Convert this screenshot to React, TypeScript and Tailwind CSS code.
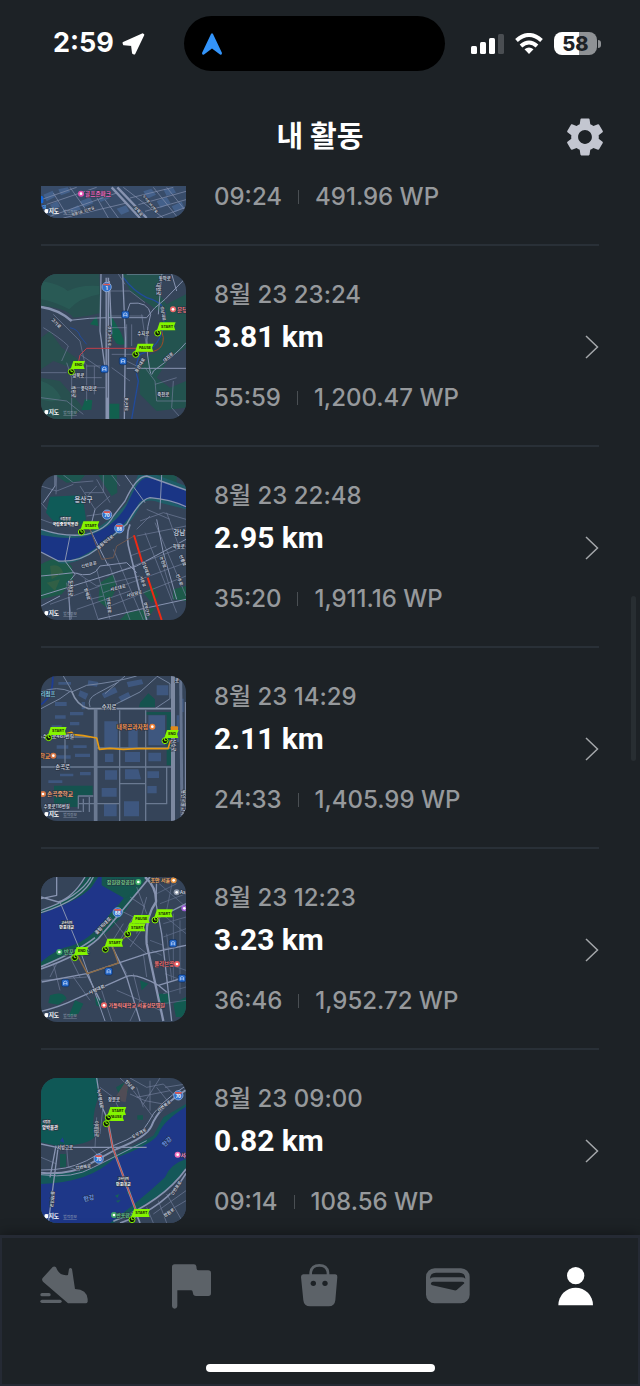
import type { ReactNode } from "react";
import { MdSettings } from "react-icons/md";

type MapProps = { top: number; label: string; children: ReactNode };

const MapFrame = ({ top, label, children }: MapProps) => (
  <svg
    role="img"
    aria-label={label}
    viewBox={`33 ${top} 435 435`}
    className="size-[145px] shrink-0 rounded-2xl bg-[#354459] font-['Inter','Noto_Sans_CJK_KR',sans-serif]"
  >
    {children}
    <path
      d={`M43 ${top + 415} q0 -8 6 -7 q3 1 6 0 l-1 11 q-4 4 -8 1 q-3 -1 -3 -5z`}
      fill="#fff"
    />
    <text x="56" y={top + 421} fontSize="17" fontWeight="700" fill="#fff">
      지도
    </text>
    <text x="100" y={top + 420} fontSize="11" fill="#9aa6b8" textDecoration="underline">
      법적정보
    </text>
  </svg>
);

type RoadProps = { d: string; w?: number; color?: string };

const Road = ({ d, w = 3, color = "#8793b0" }: RoadProps) => (
  <path d={d} fill="none" stroke={color} strokeWidth={w} strokeLinejoin="round" />
);

type LabelProps = {
  x: number;
  y: number;
  size?: number;
  color?: string;
  rotate?: number;
  children: string;
};

const Label = ({ x, y, size = 13, color = "#c6cddb", rotate = 0, children }: LabelProps) => (
  <text
    x={x}
    y={y}
    fontSize={size}
    fontWeight="600"
    fill={color}
    stroke="#27303f"
    strokeWidth="3"
    paintOrder="stroke"
    textAnchor="middle"
    transform={`rotate(${rotate} ${x} ${y})`}
  >
    {children}
  </text>
);

const Pin = ({ x, y, children }: { x: number; y: number; children: string }) => {
  const w = children === "END" ? 35 : 48;
  return (
    <g>
      <circle cx={x} cy={y} r="9" fill="#0c1405" stroke="#84f500" strokeWidth="3" />
      <path d={`M${x - 1} ${y - 6} v6 h6`} stroke="#84f500" strokeWidth="3" fill="none" />
      <path
        d={`M${x + 6} ${y - 32} h${w} l-5 12 l4 12 h-${w + 4} l-5 6 z`}
        fill="#84f500"
      />
      <text x={x + 10} y={y - 16} fontSize="11" fontWeight="700" fill="#182608">
        {children}
      </text>
    </g>
  );
};

const Shield = ({ x, y, children }: { x: number; y: number; children: string }) => (
  <g>
    <circle cx={x} cy={y} r="14" fill="#2f6fc9" stroke="#a9c3ee" strokeWidth="2" />
    <path d={`M${x - 10} ${y - 10} h20 v5 h-20z`} fill="#e0584f" />
    <text x={x} y={y + 8} fontSize="13" fontWeight="700" fill="#fff" textAnchor="middle">
      {children}
    </text>
  </g>
);

const Station = ({ x, y }: { x: number; y: number }) => (
  <g>
    <rect x={x - 11} y={y - 11} width="22" height="22" rx="5" fill="#2468c9" stroke="#0e2c5c" strokeWidth="2" />
    <path d={`M${x - 5} ${y + 6} v-9 q5 -5 10 0 v9 M${x - 5} ${y + 2} h10`} stroke="#d3e4ff" strokeWidth="2" fill="none" />
  </g>
);

const Poi = ({ x, y, color }: { x: number; y: number; color: string }) => (
  <g>
    <circle cx={x} cy={y} r="9" fill={color} />
    <circle cx={x} cy={y} r="4" fill="#fff" />
  </g>
);

const GolfMap = () => (
  <MapFrame top={-325} label="골프존파크 경로">
    <rect x="33" y="-325" width="435" height="435" fill="#384c69" />
    <g fill="#43608a">
      <path d="M40 40l28 -12 8 18 -26 14z M85 24l28 -6 8 14 -28 10z M60 70l22 -10 8 16 -22 8z M150 60l30 -12 10 18 -30 12z M200 40l26 -10 14 20 -28 12z M340 30l24 -8 14 18 -26 12z M380 60l30 -14 12 20 -30 14z M260 82l28 -10 10 18 -24 10z M400 24l30 -4 8 14 -28 10z M120 84l24 -12 12 16 -26 12z M425 75l30 -14 8 18 -28 14z" />
    </g>
    <Road w={7} d="M245 18 L330 110 M262 18 L350 110" />
    <Road w={2} d="M33 55 L140 18 M33 75 L200 18 M70 35 L110 100 M120 18 L175 95 M60 105 L260 35 M100 110 L290 65 M190 30 L235 110 M225 55 L265 110" />
    <Road w={2} d="M280 18 L400 110 M300 50 L430 18 M325 70 L468 30 M345 90 L468 55 M370 18 L440 105 M410 18 L468 90 M380 110 L468 78" />
    <Label x={160} y={94} size={11} rotate={-18}>성복1로 35번길</Label>
    <Label x={322} y={92} size={12} rotate={50}>성복로</Label>
    <Label x={358} y={70} size={10} rotate={50}>수지로342번길</Label>
    <rect x="22" y="44" width="18" height="22" rx="5" fill="#1268e0" />
    <Label x={43} y={82} size={15} color="#55a7ff">역</Label>
    <Poi x={153} y={37} color="#e44fb0" />
    <Label x={204} y={43} size={17} color="#f06ac0">골프존파크</Label>
  </MapFrame>
);

const SujiMap = () => (
  <MapFrame top={279} label="8월 23 23:24 경로">
    <path d="M33 279 H208 L212 395 Q180 405 130 410 Q110 380 33 375z" fill="#27504f" />
    <path d="M33 470 L60 450 L95 500 L145 535 L125 560 L70 540 L33 565z M33 590 L90 600 L125 640 L160 680 L120 714 H33z" fill="#28504f" />
    <path d="M275 279 H400 L375 320 L410 370 L468 340 V500 L420 530 L380 590 L420 620 L468 600 V680 L380 690 L330 640 L325 540 L385 510 L400 400 L300 330z" fill="#23534f" />
    <path d="M290 340 L345 365 L360 400 L350 540 L300 560 L290 400z" fill="#354459" />
    <path d="M238 395 q18 30 35 60 l12 35 q-25 5 -30 -10 q-15 -20 -12 -45z M165 655 l22 3 -3 28 -30 2z M238 668 h30 v45 h-30z M180 430 l20 -25 5 30z M390 440 l18 -40 5 45z" fill="#12604e" />
    <path d="M33 300 q60 10 80 30 q40 -20 95 -15 v25 q-60 10 -90 45 q-50 -25 -85 -30z M33 600 q40 10 60 50 q-20 20 -60 5z" fill="#2b605a" opacity="0.6" />
    <Road w={4} color="#214b9c" d="M280 290 Q310 330 350 350 Q420 370 402 420 Q395 500 330 520 Q310 560 325 600 L305 714" />
    <Road w={3} color="#214b9c" d="M120 440 q25 5 30 25 l20 25" />
    <Road w={2} color="#727f9b" d="M70 400 L150 480 L165 550 M40 440 Q90 470 115 495 L95 540 M33 575 H110 M110 545 L125 590 V714 M170 550 V660 M125 590 H215 M130 620 H225 M170 555 H230 M193 555 V640 M150 520 L230 575 M33 650 L110 660 L160 700" />
    <Road w={2} color="#727f9b" d="M240 330 H300 L345 365 M240 405 H340 M243 440 H290 M290 430 V500 M305 430 V495 M245 520 H330 M245 560 L300 600 M290 540 L330 560 M345 560 L375 600 L380 660 H468 M375 610 L440 590 M430 600 L425 680 L455 714 M265 279 L285 310 M335 400 L350 500" />
    <Road w={3} d="M33 377 Q85 385 120 418 Q180 410 230 410 H350 Q370 380 405 355 L468 290" />
    <Road w={7} d="M33 378 Q85 385 125 420" />
    <Road w={3} d="M285 410 L300 367 Q355 360 362 400 Q340 470 360 570 Q365 590 370 570 Q440 520 468 485 M290 562 H468 M290 279 H400 M395 279 L385 400 M425 279 L440 330" />
    <Road w={4} d="M278 279 L286 470 L283 714" />
    <Road w={4} d="M213 279 L210 450 L225 560 M238 300 L245 460" />
    <Road w={11} d="M232 290 V714" />
    <Road w={2} color="#354459" d="M232 290 V650" />
    <Road w={3} color="#c13f49" d="M145 545 L150 522 L170 502 H320" />
    <Road w={3} color="#a24b25" d="M325 508 Q400 525 400 470 L395 450" />
    <Label x={235} y={465} size={11} rotate={90}>경부고속도로</Label>
    <Label x={285} y={670} size={11} rotate={90}>용구대로</Label>
    <Label x={340} y={461}>수지로</Label>
    <Label x={75} y={430} rotate={45}>고기로</Label>
    <Label x={145} y={588}>성복로</Label>
    <Label x={176} y={626}>풍덕천로</Label>
    <Label x={126} y={632} rotate={90}>상현로</Label>
    <Label x={400} y={644}>죽전로</Label>
    <Label x={404} y={297}>동막로</Label>
    <Label x={380} y={325} rotate={90}>대왕로</Label>
    <Label x={395} y={398} size={12} rotate={80}>성남대로</Label>
    <Label x={418} y={532} rotate={-40}>대지로</Label>
    <Label x={334} y={555} rotate={-60}>포은대로</Label>
    <Shield x={230} y={318}>1</Shield>
    <Station x={286} y={401} />
    <Station x={279} y={540} />
    <Station x={223} y={564} />
    <Poi x={429} y={385} color="#ef6b6b" />
    <Label x={457} y={392} size={17} color="#f57b7b">분당</Label>
    <Pin x={383} y={456}>START</Pin>
    <Pin x={317} y={520}>PAUSE</Pin>
    <Pin x={124} y={572}>END</Pin>
  </MapFrame>
);

const YongsanMap = () => (
  <MapFrame top={27} label="8월 23 22:48 경로">
    <path d="M60 92 L150 88 L160 105 L168 160 L150 178 L70 165 L48 140z" fill="#0f5b58" />
    <path d="M75 27 H165 L150 45 L110 50z M205 27 H260 L262 80 L245 90 L225 60z M360 27 H440 V60 L375 45z" fill="#1d564f" />
    <path d="M33 295 Q90 260 125 300 L130 340 L95 385 L33 400z M210 350 l40 -25 10 40 -30 60 -25 -20z M290 440 L375 425 L350 462 H270z M340 380 l30 -20 15 30 -20 20z M430 370 l38 -10 v45 l-40 -5z" fill="#1d5a4a" />
    <path d="M60 300 q30 -10 40 20 l-35 20z M50 350 l40 -10 -15 35z" fill="#315f45" />
    <path d="M33 190 Q120 220 185 195 Q250 160 290 110 L325 25 H375 L468 60 V130 L390 110 Q340 90 325 130 Q300 180 240 220 Q150 300 90 292 L33 255z" fill="#1f5d68" />
    <path d="M33 207 Q130 225 180 207 Q255 180 290 118 Q325 35 350 35 Q400 40 468 75 V126 Q350 70 325 115 Q290 175 232 218 Q150 290 85 285 L33 258z" fill="#1a3585" />
    <Road w={2} color="#727f9b" d="M33 60 L80 75 L130 55 M80 27 L78 85 M150 60 L195 130 L240 90 M155 110 L200 60 M170 150 L240 140 M100 27 L130 50 L190 45 M220 27 V80 M245 27 L270 60 M33 160 L60 170 L90 175 M200 40 L240 110 M165 80 H220 M33 110 L50 130" />
    <Road w={2} color="#727f9b" d="M140 320 L200 360 L330 330 M110 350 L125 460 M60 415 L210 360 M200 310 L240 460 M235 290 L300 462 M250 250 L340 462 M165 340 L205 462 M300 270 L380 240 M230 330 L468 240 M220 380 L468 290 M240 420 L468 330 M140 430 L300 375 M345 200 L440 440 M375 170 L468 390 M410 140 L450 250 M330 165 L400 140 L468 160 M320 210 L468 180 M400 300 L430 400 M180 400 L220 390 M320 190 L360 150 M350 130 L420 160" />
    <Road w={4} d="M33 190 Q110 215 170 205 Q230 190 250 150 L285 105 Q320 30 350 30 L468 72" />
    <Road w={4} d="M33 258 L85 285 Q150 290 200 250 L290 175 Q330 100 360 95 Q420 100 468 122" />
    <Road w={3} d="M120 210 L105 285 L135 325 L115 350 L120 462 M195 130 L180 190 L235 300 M285 27 L345 110 M395 27 L390 130 M33 330 Q90 325 130 320 Q190 340 210 300 L290 290 L320 320 M380 160 L400 260 L440 400 M205 460 L330 430 L468 400 M75 27 V60 L40 110" />
    <Road w={5} d="M300 175 Q285 210 300 260 L350 462" />
    <Road w={3} d="M30 390 L160 350 L320 300 L468 220 M33 420 L90 390" />
    <Road w={3} color="#6c5750" d="M180 190 L215 280 L250 275 L260 240 L312 210" />
    <Road w={6} color="#ee2a14" d="M312 208 L337 290 M353 335 L395 462" />
    <Label x={160} y={107} size={20} color="#b8c3d4">용산구</Label>
    <Label x={448} y={207} size={20} color="#b8c3d4">강남</Label>
    <Label x={106} y={162} size={9} color="#fff">국립중앙</Label>
    <Label x={106} y={179} size={12} color="#fff">국립중앙박물관</Label>
    <Label x={178} y={300} rotate={-14}>신반포로</Label>
    <Label x={228} y={232} rotate={-38}>올림픽대로</Label>
    <Label x={265} y={370} rotate={-14}>서초대로</Label>
    <Label x={314} y={388} rotate={-14}>사임당로</Label>
    <Label x={343} y={310} rotate={70}>강남대로</Label>
    <Label x={334} y={348} size={12} rotate={70}>서운로</Label>
    <Label x={395} y={290} rotate={72}>논현로</Label>
    <Label x={454} y={285} rotate={68}>선릉로</Label>
    <Label x={444} y={343} rotate={68}>언주로</Label>
    <Label x={446} y={247}>학동로</Label>
    <Label x={117} y={367} rotate={90}>동작대로</Label>
    <Label x={167} y={385} rotate={75}>방배로</Label>
    <Label x={232} y={418} rotate={85}>반포대로</Label>
    <Label x={346} y={430} size={12} rotate={75}>경부간선</Label>
    <Shield x={231} y={146}>70</Shield>
    <Shield x={268} y={187}>88</Shield>
    <Pin x={154} y={198}>START</Pin>
  </MapFrame>
);

const SongokMap = () => (
  <MapFrame top={32} label="8월 23 14:29 경로">
    <path d="M72 361 H188 V390 H145 V425 H72z M410 140 h15 v160 h-15z M345 140 h75 v8 h-75z M330 112 l25 -28 20 18 v24 h-48z" fill="#15534f" />
    <g fill="#3e577f">
      <path d="M223 168 h40 v80 h-40z M295 180 h28 v65 h-28z M355 150 h50 v90 h-50z M225 315 h36 v28 h-36z M285 312 h40 l8 30 h-48z M352 318 h35 v20 h-35z M215 368 h45 v26 h-45z M282 408 h45 v45 h-45z M222 415 h38 v38 h-38z M352 362 h28 v22 h-28z M285 260 h45 v30 h-45z M355 262 h38 v26 h-38z M225 265 h25 v25 h-25z" />
      <path d="M75 110 h35 v12 h-35z M120 140 h40 v10 h-40z M75 150 h32 v10 h-32z M120 170 h28 v10 h-28z M65 180 h30 v10 h-30z M80 240 h35 v10 h-35z M130 240 h40 v8 h-40z M80 270 h42 v10 h-42z M135 265 h45 v10 h-45z M90 325 h40 v8 h-40z M150 320 h32 v10 h-32z M55 345 h42 v8 h-42z M155 110 h10 v22 h-10z M85 50 h38 v8 h-38z M175 45 l30 5 -4 14 -28 -4z M215 85 l40 -20 8 16 -40 18z M290 50 l45 -8 5 14 -45 10z M380 60 h35 v30 h-35z M150 75 l25 10 -8 18 -22 -12z M265 95 l30 -15 8 16 -28 14z M440 150 h8 v80 h-8z M455 100 h6 v40 h-6z" />
    </g>
    <Road w={5} color="#1d3c95" d="M68 32 Q72 90 33 118" />
    <Road w={3} color="#75849f" d="M33 80 Q80 60 125 80 L170 60 Q260 50 320 32 M100 32 L125 75 L90 100 L33 130 M180 125 Q170 100 200 85 L265 50 M225 85 L285 32 M240 125 L330 80 L380 35 M380 32 L420 55 V100 L375 130" />
    <Road w={5} color="#8491a9" d="M125 78 Q140 120 175 130 H430" />
    <Road w={11} color="#6a7991" d="M197 130 V467" />
    <Road w={4} color="#6a7991" d="M33 305 H430 M269 135 V467 M347 135 V467 M200 248 H430 M105 220 V300 M33 215 H180 M269 355 H347 M200 415 H269 M347 415 H410 V305 M145 430 V392 H190 M60 438 H155 M160 400 V440 M178 395 V440 M145 415 H195" />
    <Road w={12} color="#7c88a0" d="M429 32 V467" />
    <Road w={9} color="#65748f" d="M452 32 L456 467" />
    <Road w={3} color="#8995af" d="M466 110 V467" />
    <Road w={5} color="#e59a14" d="M110 205 L125 201 L132 208 L160 211 L200 218 L208 252 L240 249 L280 252 L320 250 L414 250 L422 225" />
    <Label x={54} y={91} size={16} color="#83c9e0">리점프</Label>
    <Label x={237} y={132} size={16}>수지로</Label>
    <Label x={98} y={310} size={16}>손곡로</Label>
    <Label x={85} y={218} size={15}>수지로461번길</Label>
    <Label x={80} y={427} size={13}>수풍로116번길</Label>
    <Label x={426} y={240} rotate={90}>신수로</Label>
    <Label x={455} y={412} size={14} rotate={90}>용인서울고속</Label>
    <Label x={441} y={49} size={13}>로</Label>
    <Label x={307} y={190} size={17} color="#f5944e">내복곰과자점</Label>
    <Poi x={367} y={184} color="#ee7f35" />
    <Label x={45} y={277} size={17} color="#f5944e">학교</Label>
    <Poi x={70} y={271} color="#d97744" />
    <Poi x={39} y={386} color="#d97744" />
    <Label x={90} y={392} size={17} color="#f0a070">손곡중학교</Label>
    <rect x="422" y="183" width="22" height="14" rx="3" fill="#e08a18" />
    <Pin x={56} y={217}>START</Pin>
    <Pin x={405} y={226}>END</Pin>
  </MapFrame>
);

const BanpoMap = () => (
  <MapFrame top={30} label="8월 23 12:23 경로">
    <path d="M70 30 H350 L300 110 Q250 190 190 225 Q110 270 33 300 V120 Q50 40 100 30z" fill="#15564f" />
    <path d="M33 140 Q150 100 185 60 L205 30 H320 Q300 80 240 140 Q190 210 130 235 Q80 245 33 285z" fill="#1f3589" />
    <path d="M215 30 H330 Q315 75 285 95 Q240 70 215 55z" fill="#15564f" />
    <path d="M33 30 H165 Q150 85 33 130z" fill="#354459" />
    <path d="M60 385 q40 -15 50 10 l-25 18 -30 -5z M195 390 l20 5 -5 25 -12 -5z M385 380 h35 v30 h-30z M135 400 l25 10 -15 30 -30 10z M430 410 l38 -20 v60 h-30z M330 340 l25 10 -20 20z" fill="#125a50" />
    <Road w={2} color="#727f9b" d="M210 180 L240 230 L290 320 M240 150 L290 210 L350 260 M270 130 L350 170 M300 90 L345 120 M320 60 L350 140 M280 170 L230 250 M310 150 L270 220 M340 180 L300 240 M350 90 L320 200 M120 270 L150 330 M70 290 L90 370 M33 340 L170 330 M60 330 L80 290 M130 330 L180 400 M215 370 L245 462 M310 320 L330 400 L300 462 M260 370 L330 400 L390 430 M340 260 L350 330" />
    <Road w={2} color="#65738f" d="M365 30 L468 120 M380 80 L440 50 M390 110 L468 80 M395 140 L468 200 M410 130 L430 30 M400 170 L468 150 M400 210 L468 185 M400 245 L468 235 M410 290 L468 310 M405 320 L468 345 M430 140 V340 M450 160 V380 M410 200 L425 340 M400 380 L468 360 M360 220 L400 235 M365 250 L395 265 M400 410 L468 400" />
    <Road w={4} d="M33 130 Q150 90 182 30 M33 137 Q160 98 190 30 M33 90 L85 105 Q130 90 165 30 M33 95 L80 85 V30" />
    <Road w={3} d="M90 105 L150 250 L225 462" />
    <Road w={5} d="M33 306 Q150 265 205 215 Q270 140 360 30 M33 299 Q140 255 195 212" />
    <Road w={4} d="M245 235 L290 330 L330 462 M33 433 Q90 420 140 395 L290 328 Q320 318 385 355 L410 375 M35 345 L170 320 L260 290 L350 260 L468 235 M170 320 L210 400 M385 355 L468 330 M390 150 L468 110" />
    <Road w={7} d="M345 30 Q380 60 378 105 Q345 150 350 230 L400 462" />
    <Road w={4} d="M380 30 L378 110 L395 200 L425 462" />
    <Road w={4} color="#8c6b45" d="M140 260 L172 320 L265 288 L248 240 M280 215 L300 195 M378 160 L390 150" />
    <Label x={272} y={51} size={15} color="#72cf89">잠원한강공원</Label>
    <Poi x={325} y={45} color="#47b56d" />
    <Label x={391} y={46} size={15} color="#f5ad62">호만 서울</Label>
    <Poi x={431} y={40} color="#e5923d" />
    <Poi x={440} y={76} color="#8d98ab" />
    <Label x={458} y={82} size={14}>As</Label>
    <Poi x={463} y={124} color="#a260d8" />
    <Label x={110} y={171} size={9} color="#fff">고속터미</Label>
    <Label x={110} y={187} size={12} color="#fff">반포대교</Label>
    <Label x={222} y={180} size={14} rotate={-47}>올림픽대로</Label>
    <Label x={202} y={372} size={14} rotate={-24}>사평대로</Label>
    <Poi x={88} y={255} color="#43a968" />
    <Label x={140} y={260} size={17} color="#61c68a">반포종합운</Label>
    <Label x={402} y={296} size={16} color="#ff7470">올리브영</Label>
    <Poi x={441} y={291} color="#f05f60" />
    <Poi x={222} y={415} color="#ee6565" />
    <Label x={320} y={421} size={15} color="#ff8884">가톨릭대학교 서울성모병원</Label>
    <Shield x={263} y={136}>88</Shield>
    <Station x={106} y={348} />
    <Station x={236} y={313} />
    <Station x={429} y={229} />
    <Station x={456} y={334} />
    <Pin x={306} y={176}>PAUSE</Pin>
    <Pin x={375} y={159}>START</Pin>
    <Pin x={293} y={201}>START</Pin>
    <Pin x={226} y={247}>START</Pin>
    <Pin x={134} y={272}>END</Pin>
  </MapFrame>
);

const HanRiverMap = () => (
  <MapFrame top={32} label="8월 23 09:00 경로">
    <path d="M33 32 H205 V90 Q190 130 190 165 L195 205 Q180 235 80 235 L33 225z" fill="#0f5856" />
    <path d="M90 260 h18 v40 h-18z M322 144 h17 v13 h-17z M258 60 l35 -20 v35 l-20 20z" fill="#17564f" />
    <path d="M285 45 l10 10 -8 50 -35 -8z" fill="#504c55" />
    <path d="M33 320 Q200 320 250 265 L370 205 L400 150 L468 110 V330 Q400 390 330 420 L250 467 H33z" fill="#145859" />
    <path d="M33 350 Q180 345 250 275 Q370 230 385 200 Q400 160 468 118 V275 Q420 290 405 330 Q330 400 240 467 H33z" fill="#1e3788" />
    <path d="M255 385 l12 -5 -4 12z M290 375 l15 -3 -8 12z M258 400 l14 -2 -8 8z" fill="#17605a" />
    <path d="M90 222 l8 -12 5 16z" fill="#1e3f93" />
    <path d="M315 467 L345 410 Q430 370 468 300 V467z" fill="#354459" />
    <Road w={2} color="#727f9b" d="M210 60 L250 90 L270 130 L240 160 M270 32 L310 70 L370 150 M300 32 L350 60 L400 50 L440 90 M320 90 L420 70 M340 110 L390 32 M360 40 V130 M300 80 L345 100 L400 110 M380 60 L420 110 M320 60 L340 120 M200 150 L195 240 M220 110 L210 200 M405 60 L468 50 M110 240 L115 300 L150 310 M33 270 L80 290 M180 240 L200 260" />
    <Road w={2} color="#727f9b" d="M350 420 L370 467 M385 400 L410 467 M410 380 L460 467 M370 440 L468 370 M400 440 L468 400" />
    <Road w={4} d="M200 32 L212 110 L235 160 M33 230 L80 240 L350 240 M85 235 L55 467 M78 235 L60 330" />
    <Road w={6} d="M33 316 Q110 325 170 295 L260 245 Q350 210 365 175 Q385 120 468 68" />
    <Road w={3} d="M33 308 Q110 310 170 280 L250 235 Q340 200 355 165 Q380 110 468 55 M33 322 Q130 335 190 300 L350 220" />
    <Road w={5} d="M250 462 Q400 400 468 305 M270 467 Q410 420 468 318 M315 430 L330 467" />
    <Road w={7} color="#8491a9" d="M232 155 L248 240 L318 430" />
    <Road w={3} color="#d5473c" d="M232 155 L248 240 L318 430" />
    <Label x={206} y={95} rotate={80}>녹사평대로</Label>
    <Label x={195} y={185} rotate={90}>이태원로</Label>
    <Label x={296} y={56} rotate={45}>한남로</Label>
    <Label x={252} y={102}>장문로</Label>
    <Label x={105} y={244}>서빙고로</Label>
    <Label x={160} y={303} rotate={-8}>강변북로</Label>
    <Label x={330} y={202} rotate={-30}>두무개로</Label>
    <Label x={405} y={120} rotate={-38}>강변북로</Label>
    <Label x={62} y={395} rotate={95}>동작대교</Label>
    <Label x={442} y={365} rotate={-55}>신반포로</Label>
    <Label x={420} y={440} rotate={-35}>잠원로</Label>
    <Label x={49} y={168} size={9} color="#fff">국립중</Label>
    <Label x={60} y={184} size={13} color="#fff">앙박물관</Label>
    <Label x={178} y={399} size={18} color="#6390f0" rotate={-12}>한강</Label>
    <Label x={415} y={228} size={18} color="#6390f0" rotate={-45}>한강</Label>
    <Label x={280} y={339} size={9} color="#fff">고속터미</Label>
    <Label x={280} y={355} size={12} color="#fff">반포대교</Label>
    <Shield x={206} y={274}>70</Shield>
    <Shield x={445} y={84}>70</Shield>
    <Poi x={443} y={262} color="#f36fba" />
    <Label x={466} y={268} size={15} color="#f78bc9">서래</Label>
    <Poi x={252} y={443} color="#43a968" />
    <Label x={286} y={449} size={15} color="#61c68a">반포한강</Label>
    <Pin x={229} y={169}>PAUSE</Pin>
    <Pin x={235} y={151}>START</Pin>
    <Pin x={306} y={457}>START</Pin>
  </MapFrame>
);

const activities = [
  { date: "8월 23 23:52", km: "1.02 km", time: "09:24", wp: "491.96 WP", map: <GolfMap /> },
  { date: "8월 23 23:24", km: "3.81 km", time: "55:59", wp: "1,200.47 WP", map: <SujiMap /> },
  { date: "8월 23 22:48", km: "2.95 km", time: "35:20", wp: "1,911.16 WP", map: <YongsanMap /> },
  { date: "8월 23 14:29", km: "2.11 km", time: "24:33", wp: "1,405.99 WP", map: <SongokMap /> },
  { date: "8월 23 12:23", km: "3.23 km", time: "36:46", wp: "1,952.72 WP", map: <BanpoMap /> },
  { date: "8월 23 09:00", km: "0.82 km", time: "09:14", wp: "108.56 WP", map: <HanRiverMap /> },
];

type Activity = (typeof activities)[number];

const ActivityRow = ({ date, km, time, wp, map }: Activity) => (
  <li className="border-b-2 border-[#293037] pt-7 pb-[26px] first:-mt-[141px]">
    <a href="#activity" className="flex items-center gap-7">
      {map}
      <div className="flex-1 self-start whitespace-nowrap pt-[6px] text-[24px] font-medium leading-[30px] text-[#96999c]">
        <p>{date}</p>
        <p className="mt-2 font-['Roboto',sans-serif] text-[30px] font-bold leading-[38px] text-white">
          {km}
        </p>
        <p className="mt-[27px] flex items-center gap-4">
          <span>{time}</span>
          <span className="h-[14px] w-px bg-[#4a4f53]" />
          <span>{wp}</span>
        </p>
      </div>
      <svg viewBox="0 0 14 24" className="h-6 w-[14px]" fill="none" stroke="#a4a7aa" strokeWidth="1.5">
        <path d="M1 1 L12.500 12 L1 23" />
      </svg>
    </a>
  </li>
);

const StatusBar = () => (
  <div className="grid h-[87px] shrink-0 grid-cols-[1fr_261px_1fr] items-center pr-3">
    <div className="flex items-center gap-[7px] pl-[53px] text-[27px] font-bold text-white">
      <span>2:59</span>
      <svg
        viewBox="0 0 24 24"
        className="size-6"
        fill="#fff"
        stroke="#fff"
        strokeWidth="2"
        strokeLinejoin="round"
      >
        <path d="M21.500 2.300 L2.500 11 L3 12.300 L11 13 L12 21 L13.300 21.500 L22.300 2.800z" />
      </svg>
    </div>
    <div className="flex h-[55px] items-center rounded-full bg-black pl-[18px]">
      <svg viewBox="0 0 20 22" className="h-[22px] w-5" fill="#3394fa">
        <path d="M9 1 Q10 -.5 11 1 L20 20 Q20 22.500 18 21.500 L10 15.500 L2 21.500 Q0 22.500 0 20z" />
      </svg>
    </div>
    <div className="flex items-center justify-end gap-[11px] pr-[27px]">
      <svg viewBox="0 0 33 20" className="h-5 w-[33px]" fill="#fff">
        <rect x="0" y="12" width="6" height="8" rx="1.500" />
        <rect x="9" y="8" width="6" height="12" rx="1.500" />
        <rect x="18" y="4" width="6" height="16" rx="1.500" />
        <rect x="27" y="0" width="6" height="20" rx="1.500" fill="#4a4e52" />
      </svg>
      <svg viewBox="0 0 28 21" className="h-[21px] w-7" fill="none" stroke="#fff" strokeWidth="4">
        <path d="M1.500 7.500 Q14 -3.500 26.500 7.500" />
        <path d="M6 13 Q14 6 22 13" />
        <path d="M14 21 L9.500 16.200 Q14 12.600 18.500 16.200z" fill="#fff" stroke="none" />
      </svg>
      <div className="flex items-center gap-px">
        <div className="flex h-[23px] w-[43px] items-center justify-center rounded-lg bg-linear-to-r from-white from-58% to-[#8f9295] to-58% text-[20px] font-extrabold leading-none text-[#1d2226]">
          58
        </div>
        <span className="h-2 w-[3px] rounded-r-full bg-[#8f9295]" />
      </div>
    </div>
  </div>
);

const tabs = [
  {
    name: "운동",
    icon: (
      <>
        <path d="M38 12 Q43 8 48 13 Q58 40 84 36 L87 18 Q91 12 96 18 L105 78 Q141 80 143 108 V116 Q142 121 137 121 H84 L9 56 Q4 50 8 45z" />
        <rect x="1" y="90" width="31" height="10" rx="5" />
        <rect x="1" y="110" width="64" height="10" rx="5" />
      </>
    ),
  },
  {
    name: "챌린지",
    icon: (
      <path d="M20 4 H78 Q84 4 85 10 L86 18 Q87 22 91 22 H121 Q129 22 129 30 V91 Q129 99 121 99 H84 Q76 99 75 91 L74 86 Q73 82 69 82 H28 V130 Q27 137 20 137 Q13 137 12 130 V12 Q12 4 20 4z" />
    ),
  },
  {
    name: "상점",
    icon: (
      <>
        <path d="M44 38 V30 Q46 7 70 7 Q94 7 96 30 V38" fill="none" stroke="currentColor" strokeWidth="8" />
        <path d="M22 34 H118 Q125 35 124 42 L118 112 Q116 130 98 130 H42 Q24 130 22 112 L15 42 Q15 35 22 34z" />
        <circle cx="52" cy="61" r="8" fill="#1d2226" />
        <circle cx="87" cy="61" r="8" fill="#1d2226" />
      </>
    ),
  },
  {
    name: "지갑",
    icon: (
      <>
        <rect x="6" y="16" width="131" height="105" rx="26" />
        <path d="M18 47 Q18 29 36 29 H106 Q124 29 124 47 Q120 43 112 43 H32 Q22 43 18 47z" fill="#1d2226" />
        <path d="M28 56 H115 Q122 57 121 61 L98 81 Q95 83 91 82 L25 67 Q18 64 21 60 Q24 56 28 56z" fill="#1d2226" />
      </>
    ),
  },
  {
    name: "내 활동",
    active: true,
    icon: (
      <>
        <circle cx="71" cy="38" r="26" />
        <path d="M19 127 A52 53 0 0 1 123 127z" />
      </>
    ),
  },
];

const TabBar = () => (
  <nav className="z-10 flex h-[151px] shrink-0 flex-col items-center justify-between bg-[#1d2226] pb-[14px] pt-7 shadow-[inset_0_3px_0_#252a34,inset_0_0_0_2px_#252a34,0_-2px_12px_rgba(0,0,0,0.35)]">
    <div className="grid w-full grid-cols-5">
      {tabs.map(({ name, active, icon }) => (
        <button key={name} type="button" aria-label={name} className="flex justify-center">
          <svg
            viewBox="0 0 144 144"
            className={active ? "size-12 text-white" : "size-12 text-[#5c6268]"}
            fill="currentColor"
          >
            {icon}
          </svg>
        </button>
      ))}
    </div>
    <div className="h-2 w-[229px] rounded-full bg-white" />
  </nav>
);

export default function App() {
  return (
    <div className="flex h-screen flex-col overflow-hidden bg-[#1d2226] font-['Inter','Noto_Sans_CJK_KR',sans-serif]">
      <StatusBar />
      <header className="grid h-[99px] shrink-0 grid-cols-[46px_1fr_46px] items-center px-8">
        <h1 className="col-start-2 text-center text-[29px] font-bold text-white">내 활동</h1>
        <button type="button" aria-label="설정" className="text-[#c3c6d0]">
          <MdSettings size={46} />
        </button>
      </header>
      <main className="relative min-h-0 flex-1 overflow-hidden px-[41px]">
        <ul>
          {activities.map((activity) => (
            <ActivityRow key={activity.date} {...activity} />
          ))}
        </ul>
        <div className="absolute right-1 top-[410px] h-[165px] w-[5px] rounded-full bg-[#282e32]" />
      </main>
      <TabBar />
    </div>
  );
}
